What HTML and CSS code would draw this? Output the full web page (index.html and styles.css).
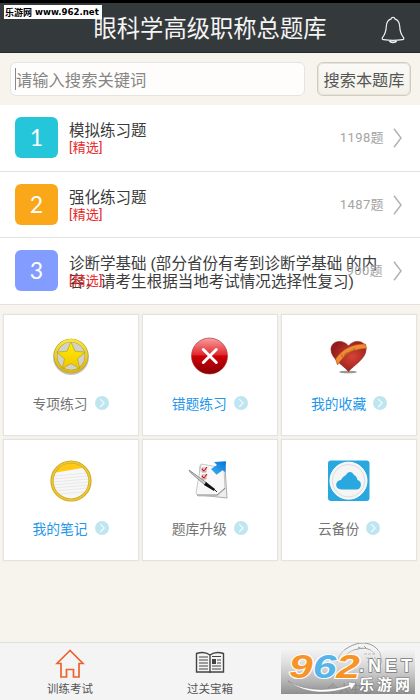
FILE: index.html
```html
<!DOCTYPE html>
<html lang="zh-CN">
<head>
<meta charset="utf-8">
<title>眼科学高级职称总题库</title>
<link rel="stylesheet" href="styles.css">
</head>
<body>
<svg class="defs" width="0" height="0" aria-hidden="true">
  <defs>
    <linearGradient id="gold" x1="0" y1="0" x2="0" y2="1"><stop offset="0" stop-color="#f7e53a"/><stop offset="1" stop-color="#dcb516"/></linearGradient>
    <linearGradient id="star" x1="0" y1="0" x2="0" y2="1"><stop offset="0" stop-color="#fff000"/><stop offset="1" stop-color="#f2c400"/></linearGradient>
    <linearGradient id="red" x1="0" y1="0" x2="0" y2="1"><stop offset="0" stop-color="#f5a0a0"/><stop offset=".46" stop-color="#e32a30"/><stop offset=".5" stop-color="#d00008"/><stop offset="1" stop-color="#880004"/></linearGradient>
    <radialGradient id="heart" cx=".6" cy=".5" r=".6"><stop offset="0" stop-color="#d84336"/><stop offset="1" stop-color="#911c19"/></radialGradient>
    <linearGradient id="arrow" x1="0" y1="1" x2="1" y2="0"><stop offset="0" stop-color="#3cb0f4"/><stop offset="1" stop-color="#0874d4"/></linearGradient>
    <symbol id="go" viewBox="0 0 14 14"><circle cx="7" cy="7" r="7" fill="#bfe5f1"/><path d="M5.2 3.2 9.2 7l-4 4" fill="none" stroke="#f4fcff" stroke-width="1.1"/></symbol>
    <symbol id="chev" viewBox="0 0 10 20"><path d="M1 .8 8 10 1 19.200" fill="none" stroke="#b2b2b2" stroke-width="1.5"/></symbol>
  </defs>
</svg>
<div class="app">
  <header class="header">
    <h1>眼科学高级职称总题库</h1>
    <svg class="bell" width="24" height="28" viewBox="0 0 24 28" fill="none" stroke="#f0f0f0" stroke-width="1.2"><path d="M12 1.300c-1 0-1.700.5-1.800 1.500-3.500 1-4.700 4-4.900 7.500-.2 5.500-1.600 8.500-3.700 11-.8 1.500-.4 2.400 1 2.400 5.900.9 12.900.9 18.800 0 1.400 0 1.800-.9 1-2.400-2.100-2.500-3.500-5.500-3.700-11-.2-3.500-1.400-6.500-4.900-7.500-.1-1-.8-1.500-1.800-1.500z"/><path d="M8.500 25c1 1.800 6 1.800 7 0" stroke-width="1.600"/></svg>
    <div class="site-mark"><span>乐游网</span><span class="url">www.962.net</span></div>
  </header>
  <div class="search">
    <div class="field"><i class="caret"></i>请输入搜索关键词</div>
    <div class="button">搜索本题库</div>
  </div>
  <main>
    <section class="list">
      <div class="row"><b class="num cyan">1</b><div class="info"><p>模拟练习题</p><span class="tag">[精选]</span></div><span class="count">1198题</span><svg class="chev" width="10" height="20"><use href="#chev"/></svg></div>
      <div class="row"><b class="num orange">2</b><div class="info"><p>强化练习题</p><span class="tag">[精选]</span></div><span class="count">1487题</span><svg class="chev" width="10" height="20"><use href="#chev"/></svg></div>
      <div class="row"><b class="num blue">3</b><div class="info"><p>诊断学基础 (部分省份有考到诊断学基础 的内<br>容，请考生根据当地考试情况选择性复习)</p><span class="tag over">[精选]</span></div><span class="count over">900题</span><svg class="chev" width="10" height="20"><use href="#chev"/></svg></div>
    </section>
    <section class="grid">
      <div class="card">
        <svg class="pic" width="44" height="44" viewBox="0 0 44 44"><circle cx="22" cy="23" r="18" fill="#999" opacity=".6"/><circle cx="22" cy="22" r="15.500" fill="#d2d2c8" stroke="#a8921c" stroke-width="3.600"/><circle cx="22" cy="22" r="15.500" fill="none" stroke="url(#gold)" stroke-width="2.800"/><path d="m22 8 4 9.200 10.200.9-7.700 6.700 2.300 9.900-8.800-5.200-8.800 5.200 2.300-9.900-7.700-6.700 10.200-.9z" fill="url(#star)" stroke="#b09a10" stroke-width=".6"/></svg>
        <div class="label"><span>专项练习</span><svg width="14" height="14"><use href="#go"/></svg></div>
      </div>
      <div class="card active">
        <svg class="pic" width="44" height="44" viewBox="0 0 44 44"><circle cx="21.500" cy="22" r="18" fill="url(#red)" stroke="#a62c30" stroke-width=".6"/><path d="m15.300 15.500 13 13m0-13-13 13" stroke="#fff" stroke-width="3" stroke-linecap="round"/></svg>
        <div class="label"><span>错题练习</span><svg width="14" height="14"><use href="#go"/></svg></div>
      </div>
      <div class="card active">
        <svg class="pic" width="44" height="44" viewBox="0 0 44 44"><ellipse cx="21" cy="38" rx="9" ry="1.300" fill="#999"/><path d="M21.500 37.500C16 31 4.500 25 4 16 3.500 6.500 16 4.500 21.500 12 27 4.500 39.500 6.500 39 16c-.5 9-12 15-17.500 21.500z" fill="url(#heart)" stroke="#872019" stroke-width=".6"/><path d="M8.500 25C15 15 26 9.500 38.500 10l1 4.500C28 14.500 18 19.500 10.500 31z" fill="#ef8a35" stroke="#ae4b1b" stroke-width=".6"/><text class="ribbon" transform="translate(15 24) rotate(-29)">Lamour</text></svg>
        <div class="label"><span>我的收藏</span><svg width="14" height="14"><use href="#go"/></svg></div>
      </div>
      <div class="card active">
        <svg class="pic" width="44" height="44" viewBox="0 0 44 44"><circle cx="22" cy="22" r="19" fill="#f7f7f7"/><path d="M7 13c4-11 25-12 29-4.500L7 13.500z" fill="#ffc916"/><path d="m5 17 33-3M4 20l35-3M4 23l36-3M4 26l36-3M5 29l34-3M6 32l32-3M9 35l26-2" stroke="#e2e2e2" stroke-width=".7"/><circle cx="22" cy="22" r="19" fill="none" stroke="#c9a422" stroke-width="3.200"/><circle cx="22" cy="22" r="18.800" fill="none" stroke="#edc632" stroke-width="1.800"/></svg>
        <div class="label"><span>我的笔记</span><svg width="14" height="14"><use href="#go"/></svg></div>
      </div>
      <div class="card">
        <svg class="pic" width="44" height="44" viewBox="0 0 44 44"><path d="m12 7 25 1 2 31-28-3z" fill="#eee" stroke="#999" stroke-width=".8"/><path d="m13 5 23 4 1 21-8 7H10l-2-3z" fill="#f8f8f8" stroke="#bbb" stroke-width=".8"/><path d="M9 36h20l8-7" fill="none" stroke="#888"/><path d="M14 9h4v4h-4zM14 16h4v4h-4z" fill="none" stroke="#b77" stroke-width=".7"/><path d="m14 10 2 2 3-4m-5 9 2 2 3-4" fill="none" stroke="#bd1820" stroke-width="1.100"/><path d="m1 11 18 13-2 2L3 14z" fill="#d0d0d0" stroke="#777" stroke-width=".8"/><path d="m18 23 9 7-1 2-10-6z" fill="#111"/><path d="m26 30 3 3" stroke="#222"/><path d="m23 10 6-4-3-3 12-.8-.5 11-3-2-6 4.500z" fill="url(#arrow)"/></svg>
        <div class="label"><span>题库升级</span><svg width="14" height="14"><use href="#go"/></svg></div>
      </div>
      <div class="card">
        <svg class="pic" width="44" height="44" viewBox="0 0 44 44"><rect x="1" y="1.500" width="41.500" height="40.500" rx="3" fill="#29a8df"/><circle cx="21.500" cy="21.700" r="18.500" fill="#f5f5f5" stroke="#fff"/><circle cx="21.500" cy="21.700" r="16.300" fill="none" stroke="#ddd"/><path d="M14.500 30.500c-7 0-7-9-.5-9.500 1.500-3 3.500-4 5-5 2-4 6-4 8 0 2 1 3 2.500 3.500 5 5 1 4.500 9.500-1 9.500z" fill="#29a8df"/></svg>
        <div class="label"><span>云备份</span><svg width="14" height="14"><use href="#go"/></svg></div>
      </div>
    </section>
  </main>
  <nav class="tabs">
    <div class="tab"><svg width="30" height="30" viewBox="0 0 30 30" fill="none" stroke="#e9632c" stroke-width="1.700"><path d="M15 1.500 2 14.500h4V28h5.500v-7.500h7V28H24V14.500h4z"/></svg><span>训练考试</span></div>
    <div class="tab"><svg width="30" height="30" viewBox="0 0 30 30" fill="none" stroke="#444" stroke-width="1.400"><path d="M15 6C11 3 6 3 1.500 4.500V23H15zm0 0c4-3 9-3 13.500-1.500V23H15zM15 6v18"/><path d="M4 8h9M4 11h9M4 14h9M4 17h9M4 20h9M17 7.500h9M22 11h4M22 14h4M17 17h9M17 20h9" stroke-width="1"/><path d="M17 10h4v5h-4z" fill="#444" stroke="none"/></svg><span>过关宝箱</span></div>
    <div class="tab"><svg width="48" height="30" viewBox="0 0 48 30" fill="none" stroke="#999" stroke-width="1"><path d="M1 19C4 9 9 5 20 1c10-3 20 1 24 9l2 9-8 10"/><path d="M7 16c3-5 8-9 15-10 7-2 13 0 17 5"/><path d="M22 4l4 2m2-3 3 3m-3 5h12m-10 4h10m-9 4h9" stroke-dasharray="3 1"/></svg><span>个人中心</span></div>
    <svg class="watermark" width="134" height="45" viewBox="0 0 134 45">
      <defs><linearGradient id="plate" x1="0" y1="0" x2="0" y2="1"><stop offset="0" stop-color="#eee" stop-opacity=".45"/><stop offset="1" stop-color="#828282" stop-opacity=".9"/></linearGradient></defs>
      <rect width="134" height="44" fill="url(#plate)"/>
      <path d="M7 31c18 11 43 10 61 4l-1-3 8 1-5 7-1-3C48 45 23 44 7 31z" fill="#fff" stroke="#777" stroke-width=".5"/>
      <text class="mark" x="8" y="27.500" textLength="71" lengthAdjust="spacingAndGlyphs"><tspan class="hot">9</tspan><tspan class="cool">6</tspan><tspan class="hot">2</tspan></text>
      <text class="net" x="78" y="22" textLength="53">.NET</text>
      <text class="cn" x="78" y="40" textLength="51">乐游网</text>
    </svg>
  </nav>
</div>
</body>
</html>
```
FILE: styles.css
```css
* { box-sizing: border-box; }
body { margin: 0; font-family: Roboto, "Noto Sans CJK SC", sans-serif; background: #f7f4ed; }
p, h1 { margin: 0; font-weight: 400; }
.defs { position: absolute; }
.app { width: 420px; height: 700px; display: flex; flex-direction: column; overflow: hidden; }
.header { position: relative; flex: none; height: 53px; border-top: 3px solid #000; border-bottom: 1px solid #25292b; background: #343a3c; display: flex; align-items: center; justify-content: center; }
.header h1 { font-size: 23.3px; line-height: 32px; color: #f4f4f4; white-space: nowrap; margin-top: 2px; }
.bell { position: absolute; right: 15px; top: 13px; }
.site-mark { position: absolute; left: 4px; top: 2px; width: 98px; height: 14px; background: #fff; display: flex; align-items: center; gap: 3px; padding-left: 1px; color: #000; font-size: 9px; font-weight: 700; white-space: nowrap; }
.url { font-family: "DejaVu Sans", sans-serif; font-size: 8.6px; }
.search { flex: none; height: 52px; display: flex; gap: 12px; padding: 9px 9px 0 10px; }
.field { width: 295px; height: 34px; border: 1px solid #e3e4e6; border-radius: 6px; background: #fefdfb; color: #858585; font-size: 16.3px; display: flex; align-items: center; padding-left: 4px; }
.caret { width: 1px; height: 22px; background: #888; }
.button { width: 94px; height: 34px; border: 1px solid #d0ccbe; border-radius: 6px; background: linear-gradient(#fbfaf7, #f2f0e8); color: #555; font-size: 16.2px; display: flex; align-items: center; justify-content: center; white-space: nowrap; box-shadow: inset 0 0 0 1px #e8e4da; }
main { flex: 1; }
.list { background: #fff; }
.row { position: relative; height: 66.500px; border-bottom: 1px solid #e2e2e2; display: flex; align-items: flex-start; padding: 12px 17px 0 15px; }
.num { width: 43px; height: 41px; border-radius: 6px; color: #fff; font: 400 23px/41px Lato, sans-serif; text-align: center; }
.cyan { background: #26c6da; }
.orange { background: #faa819; }
.blue { background: #829dff; }
.info { flex: 1; margin: 5px 0 0 11px; display: flex; flex-direction: column; }
.info p { font-size: 15.500px; line-height: 18px; color: #3c3c3c; white-space: nowrap; }
.tag { font-size: 13px; line-height: 17px; margin-top: -1px; letter-spacing: .2px; color: #e62a2a; }
.tag.over { position: absolute; left: 69px; top: 35px; }
.count { color: #a5a5a5; font-size: 13px; line-height: 18px; margin: 12px 9px 0 0; letter-spacing: .4px; }
.count.over { position: absolute; right: 28px; top: 12px; }
.chev { margin-top: 11px; flex: none; }
.row .count.over + .chev { margin-left: auto; }
.row:nth-child(3) .info { width: 0; }
.row:nth-child(3) p { letter-spacing: .03px; }
.grid { display: grid; grid-template-columns: repeat(3, 136px); grid-auto-rows: 122px; column-gap: 3.300px; row-gap: 3px; padding: 9px 0 0 2.500px; }
.card { background: #fff; border: 1px solid #e3e4e1; box-shadow: 0 0 1px #d8d8d0; display: flex; flex-direction: column; align-items: center; color: #747474; padding-top: 19px; }
.card.active { color: #2496ec; }
.label { display: flex; align-items: center; gap: 7px; margin-top: 14px; height: 22px; font-size: 13.800px; }
.tabs { position: relative; flex: none; height: 58px; border-top: 1px solid #dfdfdd; background: #f4f4f4; display: grid; grid-template-columns: repeat(3, 1fr); }
.tab { display: flex; flex-direction: column; align-items: center; padding-top: 6px; font-size: 11.500px; line-height: 17px; color: #555; }
.tab span { margin-top: 2px; }
.tab:nth-child(3) svg { margin-left: 20px; margin-top: -6px; margin-bottom: 6px; }
.watermark { position: absolute; left: 281px; top: 7px; }
.mark { font: italic 900 33px "Liberation Sans", sans-serif; stroke: #fff; stroke-width: 2px; paint-order: stroke; }
.hot { fill: #f79427; }
.cool { fill: #55b5ea; }
.net { font: 700 18px "Liberation Sans", sans-serif; fill: #fff; stroke: #777; stroke-width: 1.5px; paint-order: stroke; }
.cn { font: 700 15px "Noto Sans CJK SC", sans-serif; fill: #fff; stroke: #777; stroke-width: 1px; paint-order: stroke; }
.ribbon { font: italic 5px "Liberation Serif", serif; fill: #8b3514; }
```
